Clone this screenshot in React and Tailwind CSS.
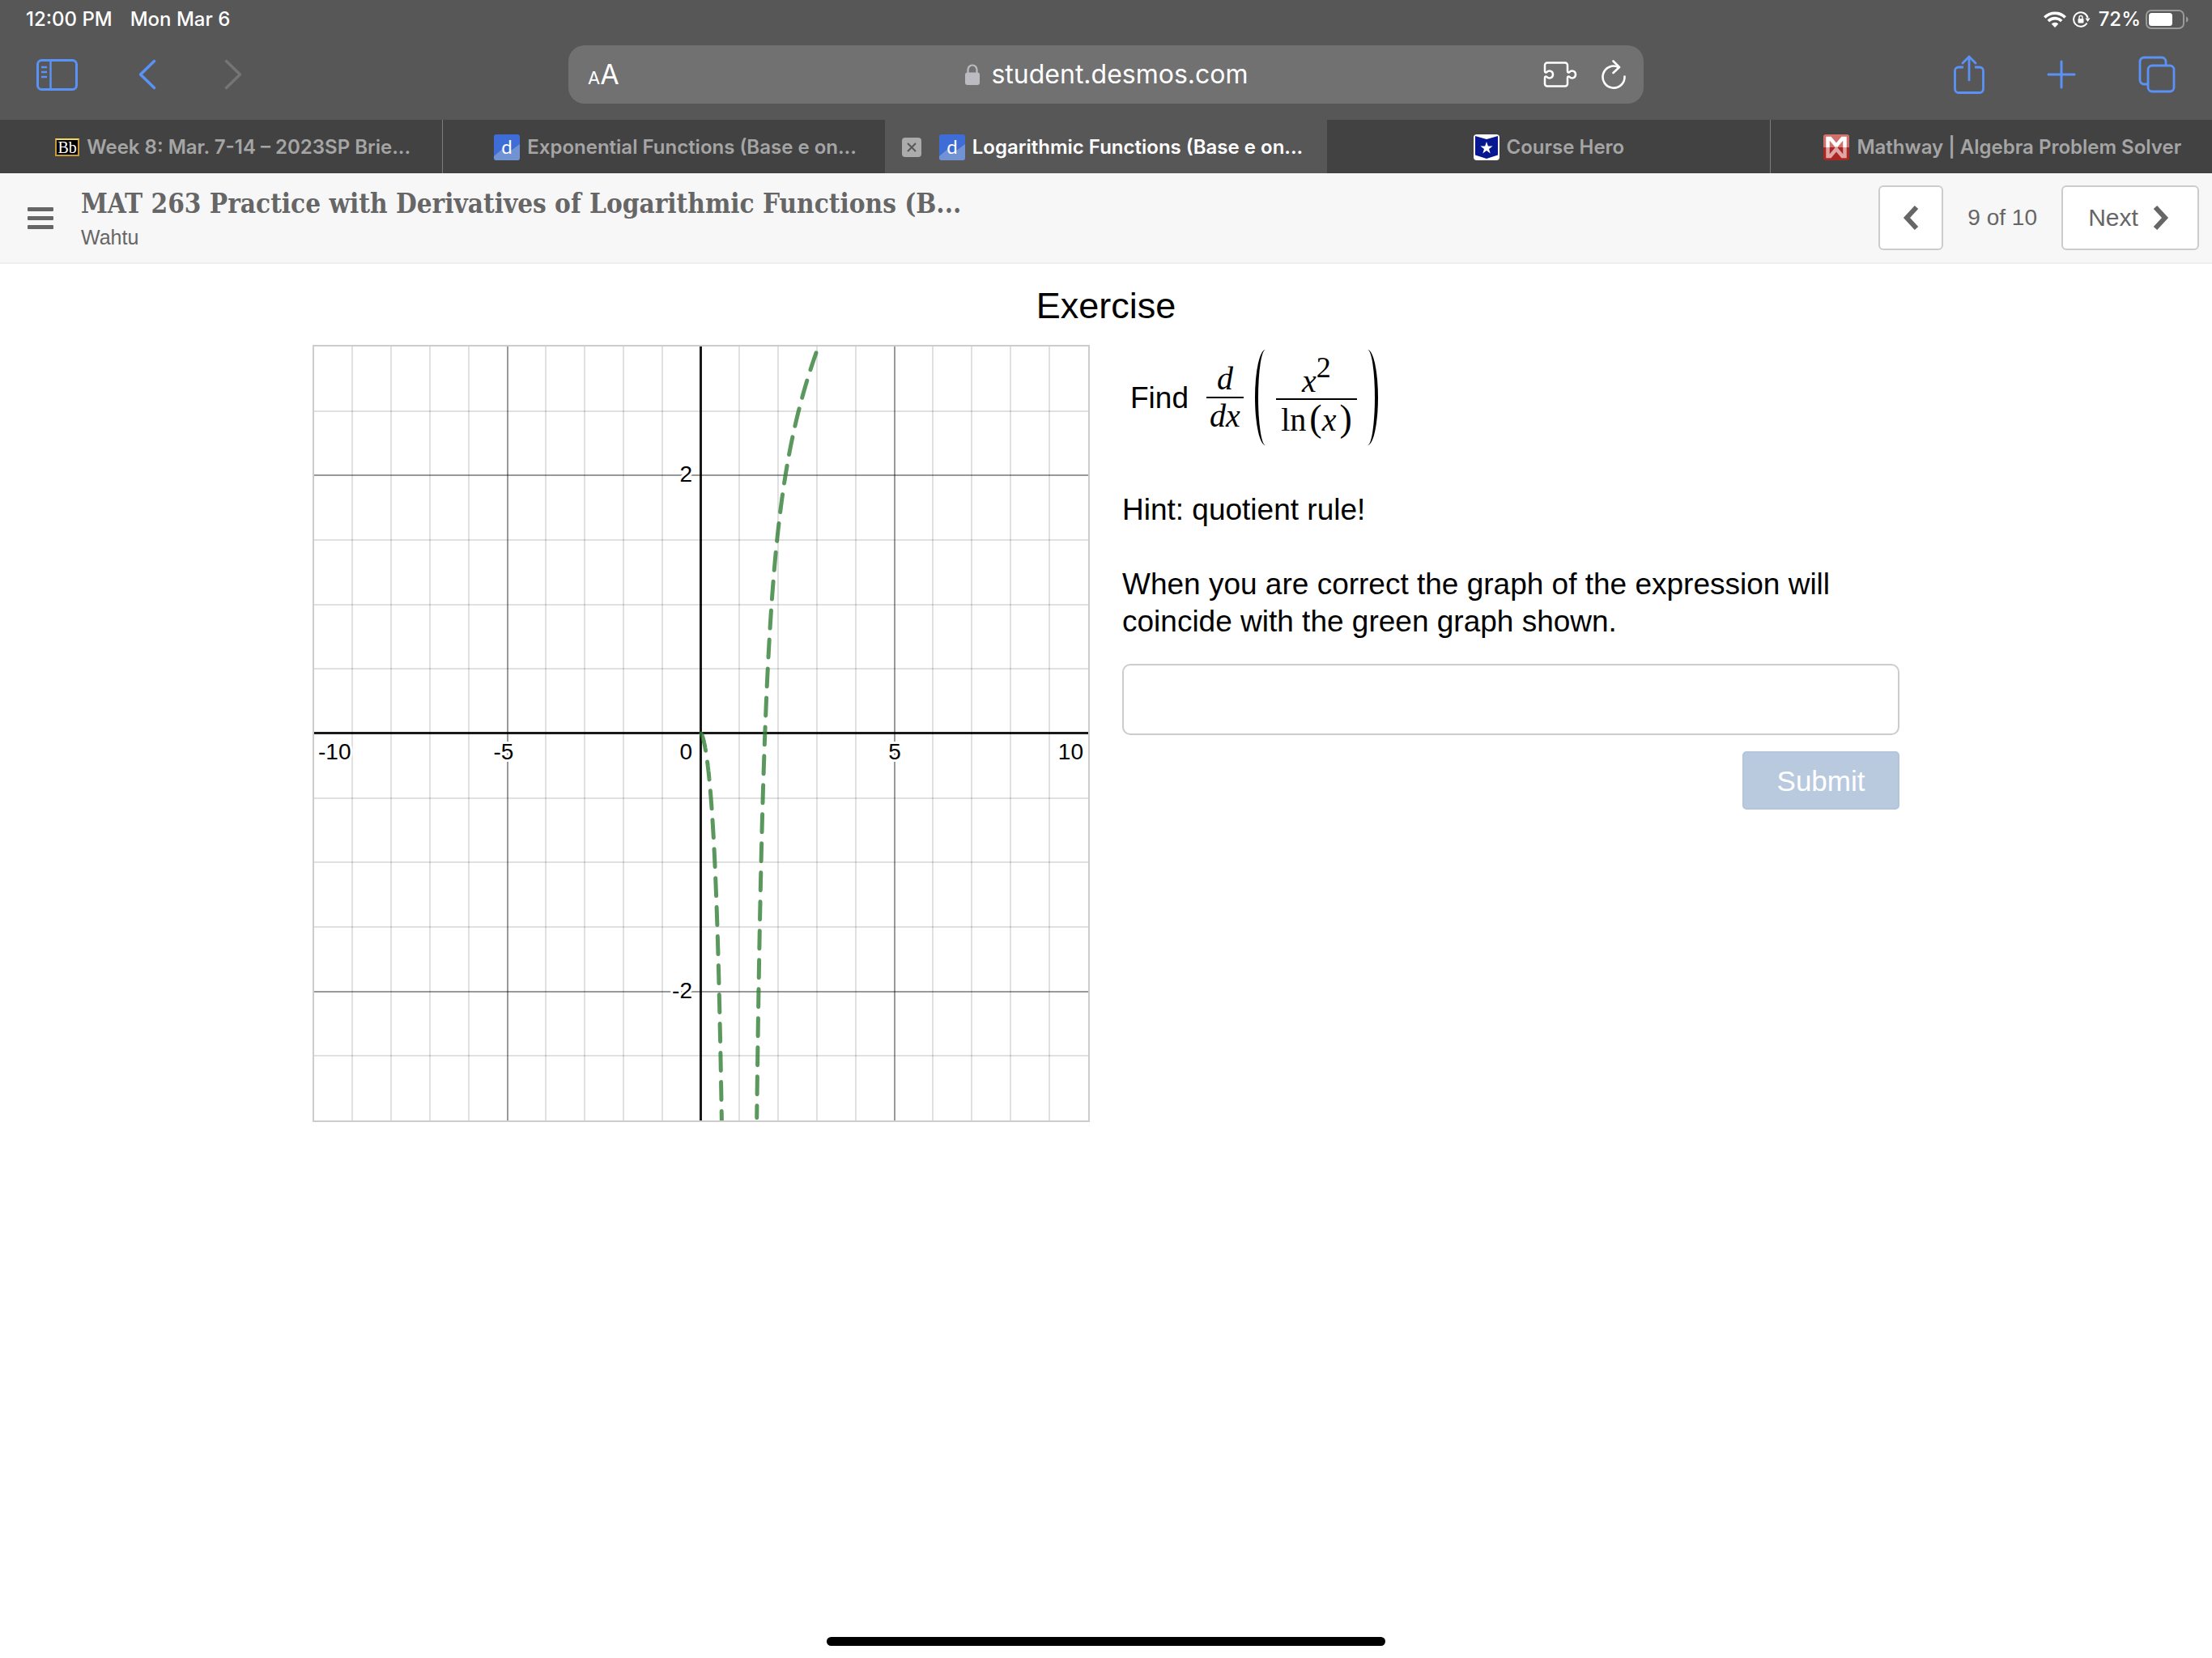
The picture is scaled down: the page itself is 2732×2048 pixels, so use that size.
import React, { useState } from "react";

const tabs = [
  { title: "Week 8: Mar. 7-14 – 2023SP Brie...", icon: "bb" },
  { title: "Exponential Functions (Base e on...", icon: "desmos" },
  { title: "Logarithmic Functions (Base e on...", icon: "desmos", active: true },
  { title: "Course Hero", icon: "hero", centered: true },
  { title: "Mathway | Algebra Problem Solver", icon: "mathway" },
];

function Favicon({ name }) {
  if (name === "bb") {
    return (
      <span className="flex h-[22px] w-[30px] shrink-0 items-center justify-center border-2 border-[#c99a35] border-t-[#f3dc5c] bg-black font-['Liberation_Serif',serif] text-xl leading-none font-normal text-white">
        Bb
      </span>
    );
  }
  if (name === "desmos") {
    return (
      <svg viewBox="0 0 32 32" className="h-8 w-8 shrink-0 overflow-visible">
        <rect width="32" height="32" rx="3" fill="#3e6dd8" />
        <path d="M0 27L10 18.500l7 4.500L32 12v17a3 3 0 0 1-3 3H3a3 3 0 0 1-3-3z" fill="#7192d3" />
        <text x="16" y="24" textAnchor="middle" fontFamily="Lato, sans-serif" fontSize="24" fontWeight="400" fill="#fff">
          d
        </text>
      </svg>
    );
  }
  if (name === "hero") {
    return (
      <svg viewBox="0 0 32 32" className="h-8 w-8 shrink-0">
        <rect width="32" height="32" rx="4" fill="#fff" />
        <path d="M2 2l14 4 14-4v23.500l-14 4.500-14-4.500z" fill="#06178f" />
        <path d="M16 9l1.900 5.400h5.700l-4.600 3.500 1.700 5.500-4.700-3.300-4.700 3.300 1.700-5.500-4.600-3.500h5.700z" fill="#fff" />
      </svg>
    );
  }
  return (
    <svg viewBox="0 0 32 32" className="h-8 w-8 shrink-0">
      <rect width="32" height="32" rx="3" fill="#a92823" />
      <path d="M0 16V3a3 3 0 0 1 3-3h26a3 3 0 0 1 3 3v13z" fill="#d0716e" />
      <path d="M5.500 16V5h3L16 14l7.500-9h3v11" fill="none" stroke="#fff" strokeWidth="4.500" />
      <path d="M5.500 16v11h3L16 18l7.500 9h3V16" fill="none" stroke="#e0a5a4" strokeWidth="4.500" />
    </svg>
  );
}

function StatusBar() {
  return (
    <div className="flex h-12 items-center justify-between pr-7 pl-8 text-2xl leading-none font-medium text-white">
      <div className="flex gap-[22px]">
        <span>12:00 PM</span>
        <span>Mon Mar 6</span>
      </div>
      <div className="flex items-center">
        <svg viewBox="0 0 28 20" className="mr-2 h-5 w-7" fill="none" stroke="#fff" strokeWidth="3.600">
          <path d="M1.300 7.500a18 18 0 0 1 25.400 0" />
          <path d="M5.800 12a11.600 11.600 0 0 1 16.400 0" />
          <path d="M14 20l-4.300-4.400a6.100 6.100 0 0 1 8.600 0z" fill="#fff" stroke="none" />
        </svg>
        <svg viewBox="0 0 22 20" className="mr-[10px] h-5 w-[22px]" fill="none" stroke="#fff" strokeWidth="2">
          <path d="M17.500 14.500A8.800 8.800 0 1 1 18.500 8" />
          <path d="M15.500 8.500h6l-3 4.500z" fill="#fff" stroke="none" />
          <rect x="6.500" y="9" width="7" height="5.500" rx="1" fill="#fff" stroke="none" />
          <path d="M8 9.500V7.500a2 2 0 0 1 4 0v2" strokeWidth="1.400" />
        </svg>
        <span>72%</span>
        <svg viewBox="0 0 54 24" className="ml-[6px] h-6 w-[54px]">
          <rect x="1" y="1" width="46" height="22" rx="6" fill="none" stroke="#9a9a9a" strokeWidth="2" />
          <rect x="4" y="4" width="29" height="16" rx="3.500" fill="#fff" />
          <path d="M50 8.500c3.500 1 3.500 6 0 7z" fill="#9a9a9a" />
        </svg>
      </div>
    </div>
  );
}

function Toolbar() {
  return (
    <div className="grid h-[100px] grid-cols-[1fr_minmax(0,1328px)_1fr] items-center px-[45px] pb-[12px]">
      <div className="flex items-center">
        <button aria-label="Sidebar" className="mr-[75px]">
          <svg viewBox="0 0 51 39" className="h-[39px] w-[51px]" fill="none" stroke="#5a92f8" strokeWidth="3">
            <rect x="1.500" y="1.500" width="48" height="36" rx="5" />
            <path d="M17.500 2v35M6 10h7M6 16h7M6 22h7" strokeWidth="2.500" />
          </svg>
        </button>
        <button aria-label="Back" className="mr-[84px]">
          <svg viewBox="0 0 22 38" className="h-[38px] w-[22px]" fill="none" stroke="#5a92f8" strokeWidth="3.500" strokeLinecap="round" strokeLinejoin="round">
            <path d="M19.500 2.500L2.500 19l17 16.500" />
          </svg>
        </button>
        <button aria-label="Forward" disabled>
          <svg viewBox="0 0 22 38" className="h-[38px] w-[22px]" fill="none" stroke="#757575" strokeWidth="3.500" strokeLinecap="round" strokeLinejoin="round">
            <path d="M2.500 2.500L19.500 19l-17 16.500" />
          </svg>
        </button>
      </div>

      <div className="flex h-[72px] items-center justify-between rounded-[20px] bg-[#717171] pr-[22px] pl-6 text-white">
        <button aria-label="Page settings" className="flex w-[102px] items-baseline leading-none">
          <span className="text-[22px]">A</span>
          <span className="text-[34px]">A</span>
        </button>
        <div className="flex items-center gap-[14px]">
          <svg viewBox="0 0 18 26" className="h-[26px] w-[18px]">
            <rect y="10.500" width="18" height="15.500" rx="3" fill="#bcbbc1" />
            <path d="M3.500 11V7a5.500 5.500 0 0 1 11 0v4" fill="none" stroke="#bcbbc1" strokeWidth="2.200" />
          </svg>
          <span className="text-[32px] leading-none">student.desmos.com</span>
        </div>
        <div className="flex items-center gap-[30px]">
          <button aria-label="Extensions">
            <svg viewBox="0 0 42 32" className="h-8 w-[42px]" fill="none" stroke="#fff" strokeWidth="2.500" strokeLinejoin="round">
              <path d="M5 1.500h22a3 3 0 0 1 3 3V12c0 1.500 1 2 2.300 1.200C35.500 10 40 12 40 16s-4.500 6-7.700 2.800C31 18 30 18.500 30 20v7.500a3 3 0 0 1-3 3H5a3 3 0 0 1-3-3V20c0-1.500 1-2 2.300-1.200C7.500 22 12 20 12 16s-4.500-6-7.700-2.800C3 14 2 13.500 2 12V4.500a3 3 0 0 1 3-3z" />
            </svg>
          </button>
          <button aria-label="Reload">
            <svg viewBox="0 0 30 36" className="h-9 w-[30px]" fill="none" stroke="#fff" strokeWidth="2.600" strokeLinecap="round" strokeLinejoin="round">
              <path d="M28.500 20.500A13.500 13.500 0 1 1 21 9" />
              <path d="M14.500 1.500l7.500 7.500-7.500 7" />
            </svg>
          </button>
        </div>
      </div>

      <div className="flex items-center justify-end">
        <button aria-label="Share" className="mr-[77px]">
          <svg viewBox="0 0 38 48" className="h-12 w-[38px]" fill="none" stroke="#5a92f8" strokeWidth="2.800" strokeLinecap="round" strokeLinejoin="round">
            <path d="M12 15H6a4.500 4.500 0 0 0-4.500 4.500v22.500a4.500 4.500 0 0 0 4.500 4.500h26a4.500 4.500 0 0 0 4.500-4.500v-22.500A4.500 4.500 0 0 0 32 15h-6" strokeLinecap="butt" />
            <path d="M19 31V2M11 10l8-8 8 8" />
          </svg>
        </button>
        <button aria-label="New tab" className="mr-[77px]">
          <svg viewBox="0 0 36 36" className="h-9 w-9" fill="none" stroke="#5a92f8" strokeWidth="3" strokeLinecap="round">
            <path d="M18 2v32M2 18h32" />
          </svg>
        </button>
        <button aria-label="Tab overview">
          <svg viewBox="0 0 46 46" className="h-[46px] w-[46px]" fill="none" stroke="#5a92f8" strokeWidth="2.800">
            <rect x="12" y="12" width="32" height="32" rx="5" />
            <path d="M12 35H7a5 5 0 0 1-5-5V7a5 5 0 0 1 5-5h22a5 5 0 0 1 5 5v5" />
          </svg>
        </button>
      </div>
    </div>
  );
}

function TabBar() {
  return (
    <div className="grid h-[66px] grid-cols-5 bg-[#424242] text-2xl leading-none font-semibold">
      {tabs.map((tab, i) => (
        <div
          key={tab.title}
          className={
            "flex min-w-0 items-center border-l pt-0.5 " +
            (tab.active
              ? "border-[#575757] bg-[#575757] text-white"
              : i === 1 || i === 4
              ? "border-[#7d7d7d] text-[#a5a5a5]"
              : "border-transparent text-[#a5a5a5]")
          }
        >
          {tab.active && (
            <button aria-label="Close tab" className="ml-5 flex h-6 w-6 items-center justify-center rounded-[4px] bg-[#ababab]">
              <svg viewBox="0 0 12 12" className="h-3 w-3" stroke="#575757" strokeWidth="2">
                <path d="M1 1l10 10M11 1L1 11" />
              </svg>
            </button>
          )}
          <a
            href="#"
            className={
              "flex min-w-0 flex-1 items-center justify-center gap-[9px] " +
              (tab.active ? "pr-6 pl-4" : tab.centered ? "px-8" : "pr-8 pl-15")
            }
          >
            <Favicon name={tab.icon} />
            <span className="whitespace-nowrap">{tab.title}</span>
          </a>
        </div>
      ))}
    </div>
  );
}

function ActivityHeader() {
  return (
    <header className="flex h-28 items-center justify-between border-b-2 border-[#eeeeee] bg-[#f7f7f7] pr-4 pl-[34px] font-['Liberation_Sans',sans-serif] text-[#666666]">
      <div className="flex items-center gap-[34px]">
        <button aria-label="Menu" className="flex w-8 flex-col gap-[6px]">
          <span className="h-[5px] rounded-[1px] bg-[#666666]" />
          <span className="h-[5px] rounded-[1px] bg-[#666666]" />
          <span className="h-[5px] rounded-[1px] bg-[#666666]" />
        </button>
        <div className="pt-1">
          <h1 className="font-['DejaVu_Serif_Condensed','DejaVu_Serif',serif] text-[33px] leading-[44px] font-bold whitespace-nowrap">
            MAT 263 Practice with Derivatives of Logarithmic Functions (B...
          </h1>
          <p className="text-[25px] leading-[38px]">Wahtu</p>
        </div>
      </div>
      <div className="flex items-center">
        <button aria-label="Previous" className="flex h-20 w-20 items-center justify-center rounded-[6px] border-2 border-[#cccccc] bg-white">
          <svg viewBox="0 0 20 30" className="h-[30px] w-5" fill="none" stroke="#666666" strokeWidth="6">
            <path d="M17 2L5 15l12 13" />
          </svg>
        </button>
        <span className="px-[30px] text-[28px] leading-none">9 of 10</span>
        <button className="flex h-20 w-[170px] items-center justify-center gap-[18px] rounded-[6px] border-2 border-[#cccccc] bg-white pr-1 text-[30px] leading-none">
          Next
          <svg viewBox="0 0 20 30" className="h-[30px] w-5" fill="none" stroke="#666666" strokeWidth="6">
            <path d="M3 2l12 13L3 28" />
          </svg>
        </button>
      </div>
    </header>
  );
}

// plot area: x from -10 to 10, y from -3 to 3
const SIZE = 956;
const toX = (x) => ((x + 10) / 20) * SIZE;
const toY = (y) => ((3 - y) / 6) * SIZE;
const derivative = (x) => (2 * x * Math.log(x) - x) / Math.log(x) ** 2;

function curve(from, to) {
  const steps = 600;
  let d = "";
  for (let i = 0; i <= steps; i++) {
    const x = from + ((to - from) * i) / steps;
    const y = x === 0 ? 0 : derivative(x);
    if (y < -3.005) continue;
    d += (d ? "L" : "M") + toX(x).toFixed(2) + " " + toY(y).toFixed(2);
  }
  return d;
}

function Graph() {
  const xs = [];
  for (let x = -9; x <= 9; x++) if (x !== 0) xs.push(x);
  const ys = [];
  for (let y = -2.5; y <= 2.5; y += 0.5) if (y !== 0) ys.push(y);

  return (
    <div className="self-start border-2 border-[#cccccc]">
      <svg viewBox="0 0 956 956" className="block w-full">
        {xs.map((x) => (
          <path key={x} d={`M${Math.floor(toX(x))} 0V956`} stroke="#000" strokeOpacity={x % 5 === 0 ? 0.4 : 0.12} strokeWidth="2" />
        ))}
        {ys.map((y) => (
          <path key={y} d={`M0 ${Math.round(toY(y))}H956`} stroke="#000" strokeOpacity={y % 2 === 0 ? 0.4 : 0.12} strokeWidth="2" />
        ))}
        <path d="M477.500 0V956M0 477.500H956" stroke="#000" strokeOpacity="0.9" strokeWidth="3" />
        <g fontFamily="Liberation Sans, Arial, sans-serif" fontSize="28" stroke="#fff" strokeWidth="6" strokeLinejoin="round" paintOrder="stroke">
          <text x="5" y="510">-10</text>
          <text x="234" y="510" textAnchor="middle">-5</text>
          <text x="467" y="510" textAnchor="end">0</text>
          <text x="717" y="510" textAnchor="middle">5</text>
          <text x="950" y="510" textAnchor="end">10</text>
          <text x="467" y="167" textAnchor="end">2</text>
          <text x="467" y="805" textAnchor="end">-2</text>
        </g>
        <g fill="none" stroke="#327e36" strokeOpacity="0.8" strokeWidth="5" strokeLinecap="round" strokeLinejoin="round" strokeDasharray="22 14">
          <path d={curve(0, 0.6)} />
          <path d={curve(1.4, 3.03)} strokeDashoffset="7" />
        </g>
      </svg>
    </div>
  );
}

function Formula() {
  return (
    <div className="flex items-center pl-[10px] text-[37px] leading-none">
      <span>Find</span>
      <div className="ml-[22px] flex items-center font-['Liberation_Serif',serif] text-[40px]">
        <div className="flex w-[46px] flex-col items-center italic">
          <span className="leading-[44px]">d</span>
          <span className="h-0.5 w-full bg-black" />
          <span className="leading-[44px]">dx</span>
        </div>
        <span aria-hidden="true" className="ml-[14px] h-[118px] w-[26px] rounded-l-[50%] border-l-4 border-black" />
        <div className="flex w-[100px] flex-col items-center">
          <span className="flex h-[60px] items-end leading-[42px] italic">
            <span>
              x<sup className="text-[36px] not-italic">2</sup>
            </span>
          </span>
          <span className="h-0.5 w-full bg-black" />
          <span className="h-14 leading-[46px]">
            ln<span className="ml-1 text-[46px] leading-none">(</span>
            <i className="mr-1">x</i>
            <span className="text-[46px] leading-none">)</span>
          </span>
        </div>
        <span aria-hidden="true" className="h-[118px] w-[26px] rounded-r-[50%] border-r-4 border-black" />
      </div>
    </div>
  );
}

export default function App() {
  const [answer, setAnswer] = useState("");

  return (
    <div className="flex min-h-screen flex-col bg-white font-[Inter,sans-serif]">
      <div className="bg-[#575757]">
        <StatusBar />
        <Toolbar />
        <TabBar />
      </div>
      <ActivityHeader />
      <main className="flex-1 px-10 pt-6 font-['Liberation_Sans',sans-serif] text-black">
        <h2 className="text-center text-[45px] leading-[56px]">Exercise</h2>
        <div className="mx-auto mt-5 grid max-w-[1960px] grid-cols-2 gap-10">
          <Graph />
          <div className="flex flex-col pt-[6px] text-[37px] leading-[46px]">
            <Formula />
            <p className="mt-[57px]">Hint: quotient rule!</p>
            <p className="mt-[46px]">When you are correct the graph of the expression will coincide with the green graph shown.</p>
            <input
              aria-label="Answer"
              value={answer}
              onChange={(e) => setAnswer(e.target.value)}
              className="mt-[29px] h-[88px] w-full rounded-[10px] border-2 border-[#cccccc] px-5"
            />
            <button className="mt-5 h-[72px] w-[194px] self-end rounded-[5px] border-2 border-[#b3c5da] bg-[#b9cadf] text-[35px] leading-none text-white">
              Submit
            </button>
          </div>
        </div>
      </main>
      <div className="mx-auto mb-[15px] h-[11px] w-[690px] rounded-full bg-black" />
    </div>
  );
}
